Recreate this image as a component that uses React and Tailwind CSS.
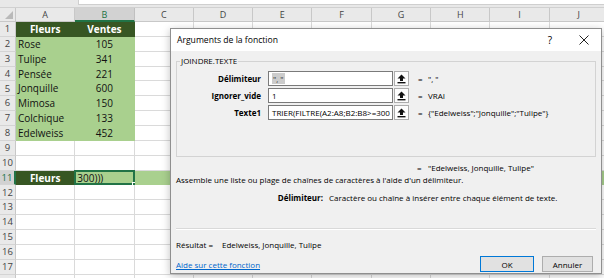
import React from "react";

const COLS = ["A", "B", "C", "D", "E", "F", "G", "H", "I", "J"];
const DATA = [
  ["Rose", 105],
  ["Tulipe", 341],
  ["Pensée", 221],
  ["Jonquille", 600],
  ["Mimosa", 150],
  ["Colchique", 133],
  ["Edelweiss", 452],
];

const sheetFont = { fontFamily: '"Open Sans", "Noto Sans", sans-serif' };
const uiFont = { fontFamily: '"Open Sans", "Noto Sans", sans-serif' };

function cellInfo(r, c) {
  if (r === 1 && c < 2) {
    return {
      cls: "bg-[#375623] border-[#375623] text-white font-bold justify-center",
      text: c === 0 ? "Fleurs" : "Ventes",
    };
  }
  if (r >= 2 && r <= 8 && c < 2) {
    const d = DATA[r - 2];
    return {
      cls:
        "bg-[#a9d08e] border-[#a9d08e] text-[#111] " +
        (c === 0 ? "justify-start pl-[2px]" : "justify-center"),
      text: c === 0 ? d[0] : String(d[1]),
    };
  }
  if (r === 11 && c === 0) {
    return {
      cls: "bg-[#375623] border-[#375623] text-white font-bold justify-center",
      text: "Fleurs",
    };
  }
  if (r === 11 && c === 1) {
    return {
      cls: "bg-[#a9d08e] border-[#a9d08e] text-[#111] justify-start pl-[2px]",
      text: "300)))",
      selected: true,
    };
  }
  if (r === 11 && c >= 2) {
    return { cls: "bg-[#a9d08e] border-[#a9d08e]", text: "" };
  }
  return { cls: "bg-white border-[#dadada]", text: "" };
}

function Sheet() {
  const rows = [];
  for (let r = 1; r <= 18; r++) rows.push(r);
  return (
    <div className="flex flex-col" style={sheetFont}>
      <div className="h-[8px] flex bg-[#e8e8e8] border-b border-[#d0d0d0]">
        <div className="w-[78px]" />
        <div className="flex-1 h-[5px] bg-white border-b border-l border-[#cfcfcf]" />
      </div>
      <div className="flex h-[14px]">
        <div className="w-[16px] shrink-0 bg-[#e9e9e9] border-r border-b border-[#c8c8c8] flex items-end justify-end pr-[2px] pb-[2px]">
          <svg width="8" height="8" viewBox="0 0 8 8">
            <polygon points="8,0 8,8 0,8" fill="#b9b9b9" />
          </svg>
        </div>
        {COLS.map((c, i) => (
          <div
            key={c}
            className={
              "w-[59.3px] shrink-0 flex items-center justify-center text-[9px] leading-none border-r " +
              (i === 1
                ? "bg-[#d2d2d2] text-[#217346] border-b-2 border-b-[#217346] border-r-[#c0c0c0]"
                : "bg-[#e9e9e9] text-[#444] border-b border-[#c8c8c8]")
            }
          >
            {c}
          </div>
        ))}
      </div>
      {rows.map((r) => (
        <div key={r} className="flex h-[14.87px]">
          <div
            className={
              "w-[16px] shrink-0 flex items-center justify-center text-[9.5px] leading-none border-b border-[#d4d4d4] " +
              (r === 11
                ? "bg-[#d2d2d2] text-[#217346] border-r-2 border-r-[#217346]"
                : "bg-[#e9e9e9] text-[#444] border-r border-r-[#c8c8c8]")
            }
          >
            {r}
          </div>
          {COLS.map((c, i) => {
            const info = cellInfo(r, i);
            return (
              <div
                key={c}
                className={
                  "relative w-[59.3px] shrink-0 flex items-center text-[10px] leading-none border-r border-b whitespace-nowrap " +
                  info.cls
                }
              >
                {info.text}
                {info.selected && (
                  <>
                    <div className="absolute left-[-1px] top-[-1px] right-[-1px] bottom-[-1px] border-2 border-[#217346]" />
                    <div className="absolute right-[-3px] bottom-[-3px] w-[5px] h-[5px] bg-[#217346] border border-white" />
                  </>
                )}
              </div>
            );
          })}
        </div>
      ))}
    </div>
  );
}

function RefButton() {
  return (
    <div className="ml-[1px] w-[15px] h-[15px] shrink-0 bg-[#fdfdfd] border border-[#adadad] flex items-center justify-center">
      <svg width="9" height="10" viewBox="0 0 9 10">
        <polygon points="4.5,0.5 8.5,4.5 6,4.5 6,7 3,7 3,4.5 0.5,4.5" fill="#111" />
        <rect x="0.5" y="8" width="8" height="1.4" fill="#111" />
      </svg>
    </div>
  );
}

function ArgRow({ label, children, value }) {
  return (
    <div className="flex items-center h-[15px]">
      <div className="w-[84px] shrink-0 text-right font-bold">{label}</div>
      <div className="ml-[7px] w-[125px] h-[15px] shrink-0 bg-white border border-[#7a7a7a] flex items-center pl-[3px] overflow-hidden whitespace-nowrap">
        {children}
      </div>
      <RefButton />
      <div className="ml-[9px] w-[4px]">=</div>
      <div className="ml-[6px] whitespace-nowrap">{value}</div>
    </div>
  );
}

function Dialog() {
  return (
    <div
      className="absolute left-[170px] top-[28px] w-[432px] h-[246px] bg-[#f0f0f0] border border-[#8f8f8f] shadow-[0_2px_8px_rgba(0,0,0,0.25)] text-[8px] leading-[11px] text-black flex flex-col"
      style={uiFont}
    >
      <div className="h-[22px] shrink-0 bg-white flex items-center">
        <div className="pl-[6px] text-[8.6px]">Arguments de la fonction</div>
        <div className="ml-auto w-[34px] flex justify-center text-[10px]">?</div>
        <div className="w-[34px] flex justify-center">
          <svg width="10" height="10" viewBox="0 0 10 10">
            <path d="M0.5 0.5 L9.5 9.5 M9.5 0.5 L0.5 9.5" stroke="#222" strokeWidth="1" />
          </svg>
        </div>
      </div>
      <fieldset className="mx-[5px] mt-[5px] h-[101px] shrink-0 border border-[#d3d3d3] flex flex-col gap-[2px]">
        <legend className="ml-[3px] px-[1px] leading-[10px]">JOINDRE.TEXTE</legend>
        <div className="h-[3px]" />
        <ArgRow label="Délimiteur" value={'", "'}>
          <span className="bg-[#cccccc] text-[#333] px-[1px]">{'", "'}</span>
        </ArgRow>
        <ArgRow label="Ignorer_vide" value="VRAI">
          1
        </ArgRow>
        <ArgRow label="Texte1" value={'{"Edelweiss";"Jonquille";"Tulipe"}'}>
          TRIER(FILTRE(A2:A8;B2:B8&gt;=300
        </ArgRow>
      </fieldset>
      <div className="mt-[5px] h-[11px] flex ml-[246px]">
        <span className="w-[4px]">=</span>
        <span className="ml-[7px] whitespace-nowrap">"Edelweiss, Jonquille, Tulipe"</span>
      </div>
      <div className="mt-[1px] h-[11px] pl-[5px] whitespace-nowrap">
        Assemble une liste ou plage de chaînes de caractères à l'aide d'un délimiteur.
      </div>
      <div className="mt-[7px] h-[11px] flex whitespace-nowrap">
        <span className="w-[152px] text-right font-bold">Délimiteur:</span>
        <span className="ml-[6px]">Caractère ou chaîne à insérer entre chaque élément de texte.</span>
      </div>
      <div className="mt-[25px] mx-[5px] border-t border-[#d9d9d9] border-b border-b-white" />
      <div className="mt-[9px] h-[11px] pl-[5px] flex whitespace-nowrap">
        <span className="w-[46px]">Résultat =</span>
        <span>Edelweiss, Jonquille, Tulipe</span>
      </div>
      <div className="mt-[6px] h-[16px] flex items-center">
        <span className="pl-[5px] text-[#0066cc] underline">Aide sur cette fonction</span>
        <div className="ml-auto mr-[8px] flex gap-[8px]">
          <div className="w-[54px] h-[16px] bg-[#e1e1e1] border border-[#0078d7] flex items-center justify-center">
            OK
          </div>
          <div className="w-[51px] h-[16px] bg-[#e1e1e1] border border-[#adadad] flex items-center justify-center">
            Annuler
          </div>
        </div>
      </div>
    </div>
  );
}

export default function App() {
  return (
    <div className="relative w-[604px] h-[278px] overflow-hidden bg-white">
      <Sheet />
      <Dialog />
    </div>
  );
}
